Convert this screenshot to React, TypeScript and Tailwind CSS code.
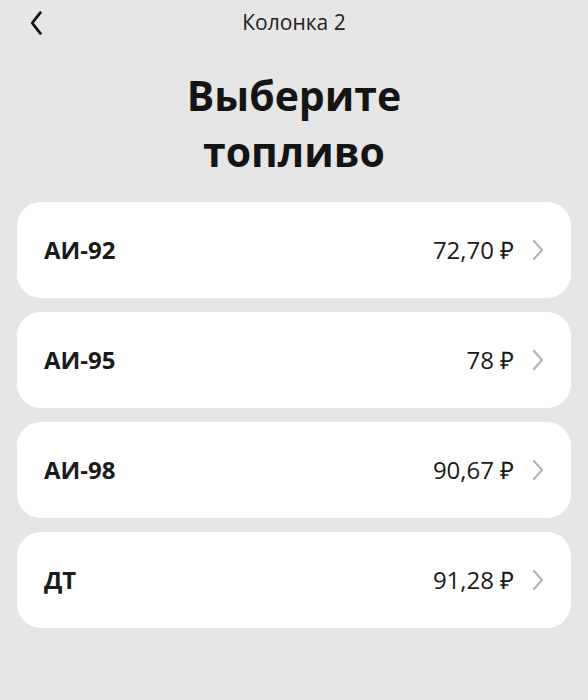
import { type ReactNode } from 'react';

const fuels = [
  { name: 'АИ-92', price: '72,70' },
  { name: 'АИ-95', price: '78' },
  { name: 'АИ-98', price: '90,67' },
  { name: 'ДТ', price: '91,28' },
];

function Chevron({ className, children }: { className?: string; children?: ReactNode }) {
  return (
    <svg className={className} viewBox="0 0 14 24" fill="none" stroke="currentColor" strokeLinecap="round" strokeLinejoin="round">
      {children}
    </svg>
  );
}

export default function App() {
  return (
    <div className="min-h-[700px] w-[588px] bg-[#e6e6e6] font-['Open_Sans',sans-serif] text-[#1a1a1a]">
      {/* header */}
      <div className="relative flex h-[46px] items-center justify-center">
        <button className="absolute left-[28px] top-[10px] text-[#111]">
          <Chevron className="h-[26px] w-[16px]">
            <path d="M11 2.5 L3.5 12 L11 21.5" strokeWidth="2.6" />
          </Chevron>
        </button>
        <span className="text-[21px] text-[#222]">Колонка 2</span>
      </div>

      <h1 className="mt-[21px] text-center text-[41px] font-bold leading-[56px] text-[#141414]">
        Выберите
        <br />
        топливо
      </h1>

      <div className="mt-[23px] flex flex-col gap-[14px] px-[17px]">
        {fuels.map((f) => (
          <div key={f.name} className="flex h-[96px] items-center rounded-[24px] bg-white pl-[27px] pr-[26px]">
            <span className="text-[24px] font-bold">{f.name}</span>
            <span className="ml-auto text-[24px] text-[#1a1a1a]">
              {f.price}
              <span className="ml-[6px]">₽</span>
            </span>
            <Chevron className="ml-[17px] h-[24px] w-[14px] text-[#b5b5b5]">
              <path d="M3 3 L11 12 L3 21" strokeWidth="2.2" />
            </Chevron>
          </div>
        ))}
      </div>
    </div>
  );
}
